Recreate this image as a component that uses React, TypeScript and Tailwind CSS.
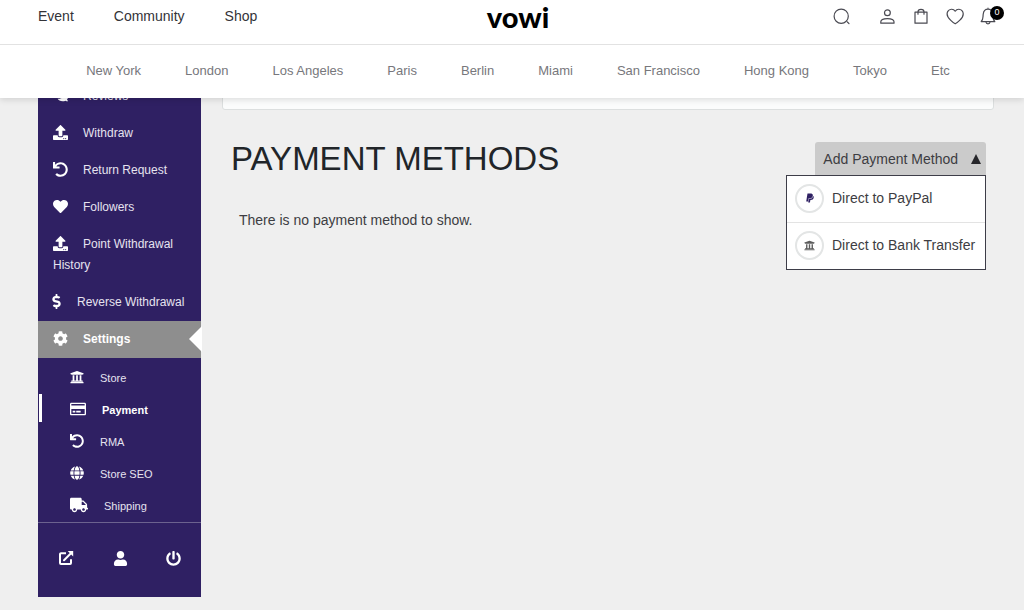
import { useState } from "react";
import type { ReactNode } from "react";
import {
	FaComments,
	FaCog,
	FaDollarSign,
	FaGlobe,
	FaHeart,
	FaPaypal,
	FaPowerOff,
	FaRegCreditCard,
	FaTruck,
	FaUndo,
	FaUniversity,
	FaUpload,
	FaUser,
} from "react-icons/fa";

const topLinks = ["Event", "Community", "Shop"];

const cities = [
	"New York",
	"London",
	"Los Angeles",
	"Paris",
	"Berlin",
	"Miami",
	"San Francisco",
	"Hong Kong",
	"Tokyo",
	"Etc",
];

const menuItems = [
	{ label: "Reviews", icon: <FaComments /> },
	{ label: "Withdraw", icon: <FaUpload /> },
	{ label: "Return Request", icon: <FaUndo /> },
	{ label: "Followers", icon: <FaHeart /> },
	{ label: "Point Withdrawal History", icon: <FaUpload /> },
	{ label: "Reverse Withdrawal", icon: <FaDollarSign />, narrow: true },
];

const settingsItems = [
	{ label: "Store", icon: <FaUniversity size={14} /> },
	{ label: "Payment", icon: <FaRegCreditCard size={16} />, active: true },
	{ label: "RMA", icon: <FaUndo size={14} /> },
	{ label: "Store SEO", icon: <FaGlobe size={14} /> },
	{ label: "Shipping", icon: <FaTruck size={18} /> },
];

const LineIcon = ({ children }: { children: ReactNode }) => (
	<svg
		width="18"
		height="18"
		viewBox="0 0 18 18"
		fill="none"
		stroke="#4a4a52"
		strokeWidth="1.2"
		strokeLinecap="round"
		strokeLinejoin="round"
	>
		{children}
	</svg>
);

const ExternalLinkIcon = () => (
	<svg
		width="16"
		height="16"
		viewBox="0 0 16 16"
		fill="none"
		stroke="currentColor"
		strokeWidth="2"
	>
		<path d="M8 3.2H3a1 1 0 0 0-1 1V13a1 1 0 0 0 1 1h9a1 1 0 0 0 1-1V9.3" />
		<path d="M6 10.2L13 3.2" strokeLinecap="round" />
		<path d="M9.7 1H15.2V6.5Z" fill="currentColor" stroke="none" />
	</svg>
);

const Header = () => (
	<header className="relative z-20 bg-white shadow-[0_2px_6px_rgba(0,0,0,0.12)]">
		<div className="grid h-[45px] grid-cols-[1fr_auto_1fr] border-b border-[#e2e2e2] pr-[26px] pl-[38px]">
			<nav aria-label="Main" className="flex gap-10 pt-[6px] text-[14px] leading-5 text-[#333338]">
				{topLinks.map((link) => (
					<a key={link} href="#">
						{link}
					</a>
				))}
			</nav>

			<a
				href="#"
				className="font-[Lato,sans-serif] text-[29px] leading-[34px] font-black text-black"
			>
				vowi
			</a>

			<div className="flex items-start justify-end gap-4 pt-[7px]">
				<button type="button" aria-label="Search" className="mr-3">
					<LineIcon>
						<circle cx="9.2" cy="9.2" r="7.1" />
						<path d="M15.4 15L17 16.6" />
					</LineIcon>
				</button>
				<button type="button" aria-label="Account">
					<LineIcon>
						<circle cx="9.4" cy="5.8" r="2.9" />
						<path d="M2.8 16.2V14.8C2.8 12.6 5 11.6 9.4 11.6S16 12.6 16 14.8V16.2Z" />
					</LineIcon>
				</button>
				<button type="button" aria-label="Cart">
					<LineIcon>
						<path d="M3 5.2H15V16.2H3Z" />
						<path d="M6 7.2V5C6 1.6 12 1.6 12 5V7.2" />
					</LineIcon>
				</button>
				<button type="button" aria-label="Wishlist">
					<LineIcon>
						<path d="M9.2 4.2C7.4 1.4 3.4 1.8 1.8 4.4C0 7.6 2.2 11 4.8 13.4C6.2 14.8 7.6 16 9.2 16.8C10.8 16 12.2 14.8 13.6 13.4C16.2 11 18.2 7.6 16.6 4.4C15 1.8 11 1.4 9.2 4.2Z" />
					</LineIcon>
				</button>
				<button type="button" aria-label="Notifications" className="relative">
					<LineIcon>
						<path d="M8 1.2V2.2M1.2 14.6C3.4 13 2.8 10.4 3.2 7.2C3.6 4 5.2 2.2 8 2.2S12.4 4 12.8 7.2C13.2 10.4 12.6 13 14.8 14.6Z" />
						<path d="M6 15C6.2 17.4 9.8 17.4 10 15" />
					</LineIcon>
					<span className="absolute -top-px left-[10px] flex size-[14px] items-center justify-center rounded-full bg-black text-[9px] text-white">
						0
					</span>
				</button>
			</div>
		</div>

		<nav
			aria-label="Cities"
			className="flex h-[53px] items-center justify-center gap-11 pb-0.5 pl-3 text-[13px] text-[#77777c]"
		>
			{cities.map((city) => (
				<a key={city} href="#">
					{city}
				</a>
			))}
		</nav>
	</header>
);

const Sidebar = () => (
	<aside className="w-[163px] shrink-0 self-start bg-[#2f2063] text-[#e6e3ef]">
		<nav aria-label="Dashboard">
			<ul className="text-[12px] leading-[21px]">
				{menuItems.map((item) => (
					<li key={item.label}>
						<a href="#" className="block py-2 pr-3 pl-[15px]">
							<span
								className={`inline-block pb-0.5 align-middle text-[15px] text-white ${
									item.narrow ? "-ml-1 w-7" : "w-[30px]"
								}`}
							>
								{item.icon}
							</span>
							{item.label}
						</a>
					</li>
				))}
				<li className="relative bg-[#8e8e8e] font-bold text-white">
					<a href="#" className="block py-2 pl-[15px]">
						<span className="inline-block w-[30px] pb-0.5 align-middle text-[15px]">
							<FaCog />
						</span>
						Settings
					</a>
					<svg
						className="absolute top-[5px] -right-px"
						width="13"
						height="26"
						viewBox="0 0 13 26"
						fill="#fff"
					>
						<path d="M0 13L13 0V26Z" />
					</svg>
				</li>
			</ul>

			<ul className="border-b border-[#6c628f] pt-1 text-[11px]">
				{settingsItems.map((item) => (
					<li key={item.label} className="relative">
						<a
							href="#"
							className={`flex h-8 items-center gap-4 pl-8 ${
								item.active ? "font-bold text-white" : ""
							}`}
						>
							<span className="pb-0.5 text-white">{item.icon}</span>
							{item.label}
						</a>
						{item.active && (
							<span className="absolute top-0 left-px h-7 w-[3px] bg-white" />
						)}
					</li>
				))}
			</ul>
		</nav>

		<div className="flex h-[74px] items-center justify-between px-5 pb-1 text-[15px] text-white">
			<a href="#" aria-label="Visit store">
				<ExternalLinkIcon />
			</a>
			<a href="#" aria-label="Edit account">
				<FaUser />
			</a>
			<a href="#" aria-label="Log out">
				<FaPowerOff />
			</a>
		</div>
	</aside>
);

const PaymentMethods = () => {
	const [open, setOpen] = useState(true);

	return (
		<main className="min-w-0 flex-1">
			{/* Bottom edge of the notice card under the header */}
			<div className="h-8 rounded-[3px] border border-[#dcdfdf] bg-[#fbfcfc]" />

			<div className="mt-8 flex items-start justify-between pr-2 pl-[9px]">
				<h1 className="text-[33px] leading-[34px] text-[#212529]">
					PAYMENT METHODS
				</h1>

				<div className="relative">
					<button
						type="button"
						aria-expanded={open}
						onClick={() => setOpen(!open)}
						className="flex h-[34px] items-center gap-3 rounded-t-[3px] bg-[#cbcbcb] pr-1 pl-2 text-[14px] text-[#3d3d42]"
					>
						Add Payment Method
						<svg width="12" height="10" viewBox="0 0 12 10" fill="#26262a">
							<path d="M6 0L11 10H1Z" />
						</svg>
					</button>

					{open && (
						<ul className="absolute top-[33px] right-0 w-[200px] border border-[#3d3d48] bg-white text-[14px] text-[#3d3d42]">
							<li>
								<a href="#" className="flex h-[46px] items-center gap-2 pb-0.5 pl-2">
									<span className="flex size-[29px] items-center justify-center rounded-full border-2 border-[#e3e5e5]">
										<FaPaypal size={10} color="#2f2063" />
									</span>
									Direct to PayPal
								</a>
							</li>
							<li className="border-t border-[#e3e3e3]">
								<a href="#" className="flex h-[46px] items-center gap-2 pb-0.5 pl-2">
									<span className="flex size-[29px] items-center justify-center rounded-full border-2 border-[#e3e5e5]">
										<FaUniversity size={11} color="#5c5c5c" />
									</span>
									Direct to Bank Transfer
								</a>
							</li>
						</ul>
					)}
				</div>
			</div>

			<p className="mt-[34px] pl-[17px] text-[14px] leading-5 text-[#3d3d42]">
				There is no payment method to show.
			</p>
		</main>
	);
};

const App = () => (
	<div className="min-h-screen overflow-hidden bg-[#efefef] font-['Liberation_Sans',Arial,sans-serif]">
		<Header />
		<div className="-mt-5 flex gap-[21px] pr-[30px] pb-[13px] pl-[38px]">
			<Sidebar />
			<PaymentMethods />
		</div>
	</div>
);

export default App;
